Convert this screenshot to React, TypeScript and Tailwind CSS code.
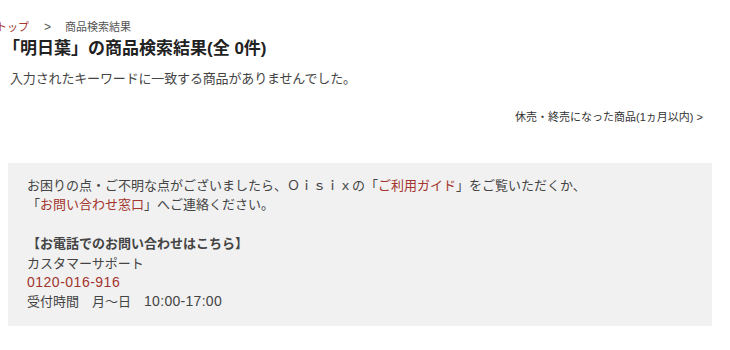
export default function App() {
  const red = "text-[#a2352d]";
  return (
    <div
      className="w-[730px] h-[350px] overflow-hidden bg-white text-[#333]"
      style={{ fontFamily: '"Liberation Sans", "Noto Sans CJK JP", sans-serif' }}
    >
      <div className="pt-[20px]">
        {/* breadcrumb */}
        <div className="-ml-[4px] flex items-center h-[14px] text-[11px] leading-[14px] text-[#555]">
          <span className={red}>トップ</span>
          <span className="ml-[15px] mr-[14px] text-[12px]">&gt;</span>
          <span>商品検索結果</span>
        </div>

        <h1 className="mt-[3px] ml-[3px] h-[24px] text-[17px] leading-[24px] font-bold text-[#222]">
          「明日葉」の商品検索結果(全 0件)
        </h1>

        <p className="mt-[8px] ml-[10px] h-[20px] text-[13px] leading-[20px] tracking-[-0.15px] text-[#444]">
          入力されたキーワードに一致する商品がありませんでした。
        </p>

        <div className="mt-[20px] h-[16px] pr-[27px] text-right text-[11px] leading-[16px] text-[#333]">
          休売・終売になった商品(1ヵ月以内) &gt;
        </div>

        <div className="mt-[38px] ml-[8px] w-[704px] bg-[#f1f1f1] pt-[13px] pb-[14px] pl-[19px] text-[13px] leading-[19.4px] text-[#444]">
          <p>
            お困りの点・ご不明な点がございましたら、Ｏｉｓｉｘの「<span className={red}>ご利用ガイド</span>」をご覧いただくか、
            <br />
            「<span className={red}>お問い合わせ窓口</span>」へご連絡ください。
          </p>
          <p className="mt-[19.4px] font-bold">【お電話でのお問い合わせはこちら】</p>
          <p>カスタマーサポート</p>
          <p className={`${red} text-[14px] tracking-[0.5px]`}>0120-016-916</p>
          <p>
            受付時間　月〜日　<span className="text-[14px] tracking-[0.3px]">10:00-17:00</span>
          </p>
        </div>
      </div>
    </div>
  );
}
